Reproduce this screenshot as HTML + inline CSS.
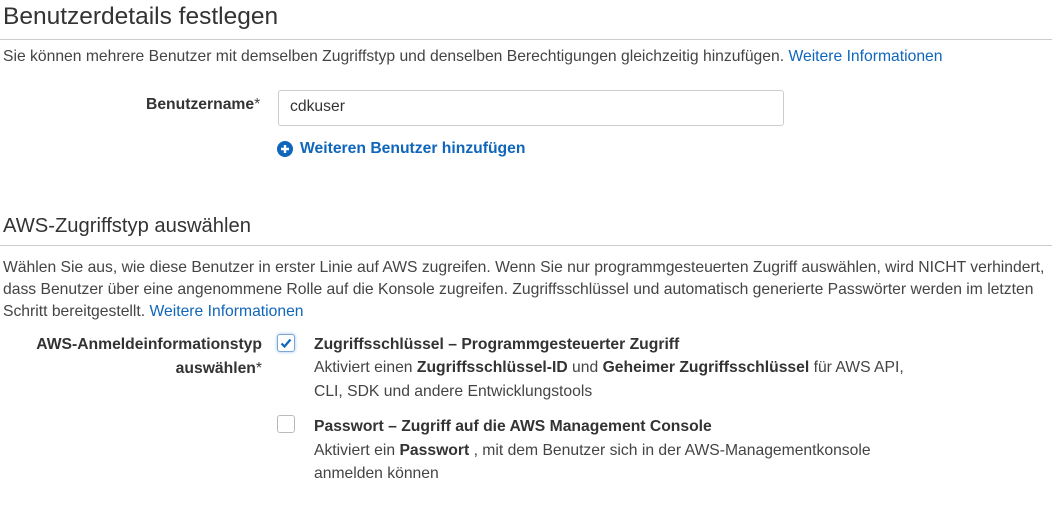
<!DOCTYPE html><html><head><style>
body{margin:0;width:1052px;height:510px;background:#fff;font-family:"Liberation Sans",sans-serif;color:#444;position:relative;overflow:hidden}
.a{position:absolute;white-space:nowrap}
h{position:absolute;font-size:24.5px;color:#333}
.rule{position:absolute;left:0;width:1052px;height:1px;background:#ccc}
p{margin:0}
.t{font-size:15.7px;line-height:22px}
a{color:#1066bb;text-decoration:none}
b{color:#333}
.cb{position:absolute;width:16px;height:16px;border:1px solid #bbb;border-radius:3px;background:#fff}
</style></head><body>
<h class="a" style="left:3px;top:3px">Benutzerdetails festlegen</h>
<div class="rule" style="top:39px"></div>
<div class="a t" style="left:3px;top:46px">Sie können mehrere Benutzer mit demselben Zugriffstyp und denselben Berechtigungen gleichzeitig hinzufügen. <a>Weitere Informationen</a></div>
<div class="a t" style="left:146px;top:94px"><b>Benutzername</b>*</div>
<div class="a" style="left:278px;top:90px;width:504px;height:34px;border:1px solid #ccc;border-radius:3px"></div>
<div class="a t" style="left:290px;top:96px;color:#333">cdkuser</div>
<svg class="a" style="left:277px;top:141px" width="16" height="16" viewBox="0 0 16 16"><circle cx="8" cy="8" r="8" fill="#1066bb"/><path d="M8 4v8M4 8h8" stroke="#fff" stroke-width="2.4"/></svg>
<div class="a t" style="left:300px;top:138px;font-weight:bold;color:#1066bb">Weiteren Benutzer hinzufügen</div>
<h class="a" style="left:3px;top:215px;font-size:20.2px">AWS-Zugriffstyp auswählen</h>
<div class="rule" style="top:245px"></div>
<div class="a t" style="left:3px;top:257px;white-space:normal;width:1050px">Wählen Sie aus, wie diese Benutzer in erster Linie auf AWS zugreifen. Wenn Sie nur programmgesteuerten Zugriff auswählen, wird NICHT verhindert, dass Benutzer über eine angenommene Rolle auf die Konsole zugreifen. Zugriffsschlüssel und automatisch generierte Passwörter werden im letzten Schritt bereitgestellt. <a>Weitere Informationen</a></div>
<div class="a t" style="right:790px;top:333px;line-height:23.5px;text-align:right;font-weight:bold;color:#333">AWS-Anmeldeinformationstyp<br>auswählen<span style="font-weight:normal">*</span></div>
<div class="cb" style="left:277px;top:334px;border-color:#7aa7d6;box-shadow:0 0 3px #9cc0e8"></div>
<svg class="a" style="left:280px;top:337px" width="12" height="12" viewBox="0 0 12 12"><path d="M1.5 6.5l3 3 6-7" stroke="#1066bb" stroke-width="2.2" fill="none"/></svg>
<div class="a t" style="left:314px;top:332.5px;line-height:23.5px"><b>Zugriffsschlüssel – Programmgesteuerter Zugriff</b><br>Aktiviert einen <b>Zugriffsschlüssel-ID</b> und <b>Geheimer Zugriffsschlüssel</b> für AWS API,<br>CLI, SDK und andere Entwicklungstools</div>
<div class="cb" style="left:277px;top:415px"></div>
<div class="a t" style="left:314px;top:415px;line-height:23.5px"><b>Passwort – Zugriff auf die AWS Management Console</b><br>Aktiviert ein <b>Passwort</b> , mit dem Benutzer sich in der AWS-Managementkonsole<br>anmelden können</div>
</body></html>
